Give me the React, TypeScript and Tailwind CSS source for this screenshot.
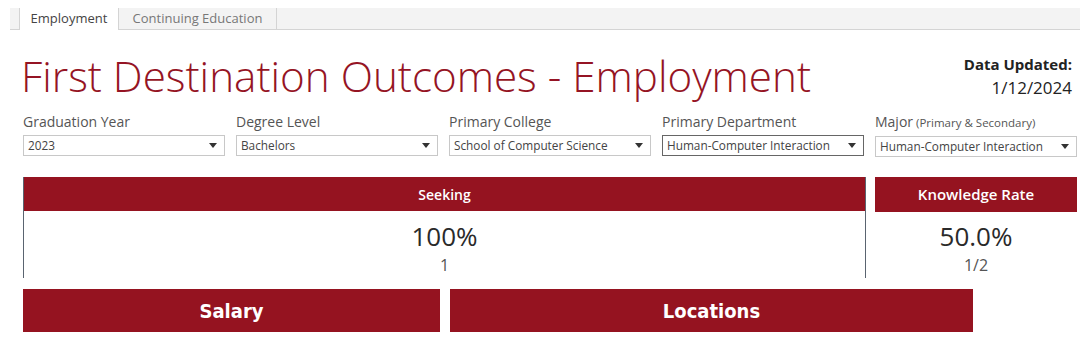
const filters = [
  { label: "Graduation Year", value: "2023" },
  { label: "Degree Level", value: "Bachelors" },
  { label: "Primary College", value: "School of Computer Science" },
  { label: "Primary Department", value: "Human-Computer Interaction", active: true },
  { label: "Major", sub: "(Primary & Secondary)", value: "Human-Computer Interaction" },
];

function Caret() {
  return (
    <svg width="8" height="5" viewBox="0 0 8 5" className="shrink-0">
      <path d="M0 0 H8 L4 5 Z" fill="#333" />
    </svg>
  );
}

export default function App() {
  return (
    <div className="w-[1080px] h-[358px] bg-white overflow-hidden" style={{ fontFamily: '"Open Sans", "Noto Sans", sans-serif' }}>
      {/* TABS */}
      <div className="pt-[8px] pl-[10px]">
        <div className="flex h-[22px] bg-[#f3f3f3] border-b border-[#d4d4d4]">
          <div className="w-[10px] border-r border-[#d4d4d4]" />
          <div className="w-[99px] bg-white border-r border-[#d4d4d4] text-[13px] text-[#444] flex items-center justify-center h-[22px]">
            Employment
          </div>
          <div className="w-[158px] border-r border-[#d4d4d4] text-[13px] text-[#777] flex items-center justify-center">
            Continuing Education
          </div>
        </div>
      </div>

      {/* TITLE */}
      <div className="flex justify-between items-start pl-[21px] pr-[8px] mt-[23px]">
        <h1 className="text-[42.2px] leading-[46px] font-light text-[#951424]">
          First Destination Outcomes - Employment
        </h1>
        <div className="text-right text-[15px] leading-[23px] text-[#222]">
          <div className="font-bold">Data Updated:</div>
          <div className="text-[17px]">1/12/2024</div>
        </div>
      </div>

      {/* FILTERS */}
      <div className="flex gap-[11px] pl-[23px] mt-[14px]">
        {filters.map((f) => (
          <div key={f.label} className="w-[202px]">
            <div className="text-[14px] leading-[18px] text-[#555] whitespace-nowrap">
              {f.label}
              {f.sub && <span className="text-[11.5px]"> {f.sub}</span>}
            </div>
            <div
              className={`mt-[4px] h-[21px] flex items-center justify-between pl-[4px] pr-[7px] border ${
                f.active ? "border-[#666]" : "border-[#c8c8c8]"
              }`}
            >
              <span className="text-[11.8px] text-[#444] whitespace-nowrap">{f.value}</span>
              <Caret />
            </div>
          </div>
        ))}
      </div>

      {/* KPI ROW */}
      <div className="flex gap-[9px] pl-[23px] mt-[20px]">
        <div className="w-[843px] h-[101px] flex flex-col border-x border-[#5a6470]">
          <div className="h-[34px] bg-[#951320] text-white text-[14px] font-semibold flex items-center justify-center">Seeking</div>
          <div className="flex-1 flex flex-col items-center pt-[9px]">
            <div className="text-[26px] leading-[32px] text-[#2a2a2a]">100%</div>
            <div className="text-[16px] leading-[20px] text-[#555] mt-[3px]">1</div>
          </div>
        </div>
        <div className="w-[202px] flex flex-col">
          <div className="h-[35px] bg-[#951320] text-white text-[15px] font-semibold flex items-center justify-center">Knowledge Rate</div>
          <div className="flex flex-col items-center pt-[8px]">
            <div className="text-[26px] leading-[32px] text-[#2a2a2a]">50.0%</div>
            <div className="text-[16px] leading-[20px] text-[#555] mt-[3px]">1/2</div>
          </div>
        </div>
      </div>

      {/* SECTION HEADERS */}
      <div className="flex gap-[10px] pl-[23px] mt-[11px]">
        <div className="w-[417px] h-[43px] bg-[#951320] text-white text-[20px] font-bold flex items-center justify-center" style={{ fontFamily: '"DejaVu Sans Condensed", "DejaVu Sans", sans-serif' }}>
          Salary
        </div>
        <div className="w-[523px] h-[43px] bg-[#951320] text-white text-[20px] font-bold flex items-center justify-center" style={{ fontFamily: '"DejaVu Sans Condensed", "DejaVu Sans", sans-serif' }}>
          Locations
        </div>
      </div>
    </div>
  );
}
